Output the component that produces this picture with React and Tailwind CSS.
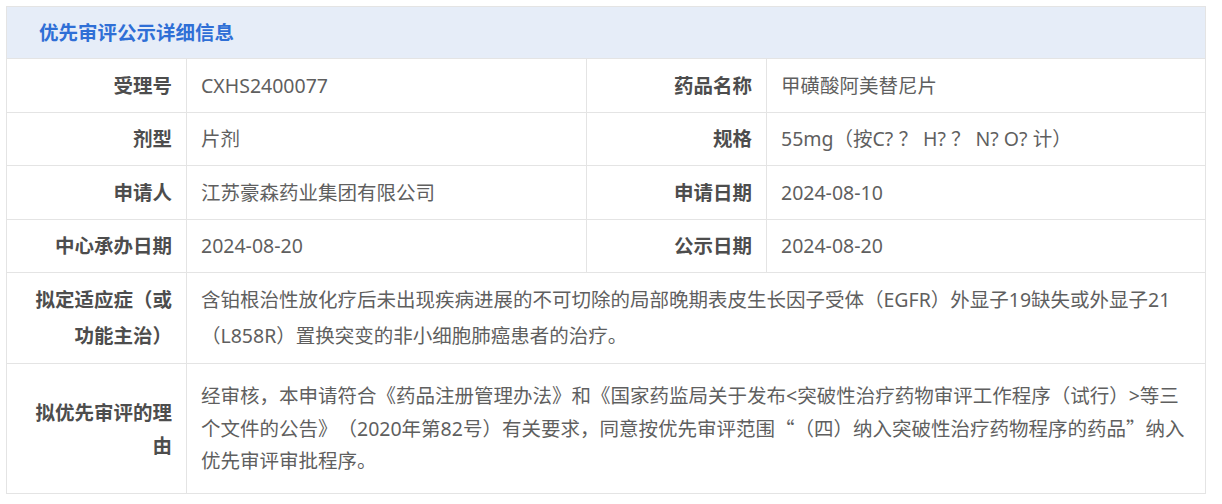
import React from 'react';

const rows = [
  ['受理号', 'CXHS2400077', '药品名称', '甲磺酸阿美替尼片'],
  ['剂型', '片剂', '规格', '55mg（按C? ？ H? ？ N? O? 计）'],
  ['申请人', '江苏豪森药业集团有限公司', '申请日期', '2024-08-10'],
  ['中心承办日期', '2024-08-20', '公示日期', '2024-08-20'],
];

const label = 'border border-[#e4e4e4] text-right pr-[14px] pl-[14px] font-bold text-[#4d4d4d] align-middle';
const value = 'border border-[#e4e4e4] pl-[14px] pr-[14px] text-[#5f5f5f] align-middle';
const cjk = "font-['Noto_Sans_CJK_SC',sans-serif]";

const App = () => {
  return (
    <div className="p-[6px] bg-white font-['Noto_Sans','Noto_Sans_CJK_SC',sans-serif] text-[19.5px] [text-spacing-trim:space-all]">
      <table className="w-[1200px] table-fixed border-collapse">
        <colgroup>
          <col className="w-[180px]" />
          <col className="w-[400px]" />
          <col className="w-[180px]" />
          <col />
        </colgroup>
        <tbody>
          <tr className="h-[52px]">
            <td colSpan={4} className="border border-[#e4e4e4] bg-[#e6edf8] px-[32px] font-bold text-[#2f6fd6]">
              优先审评公示详细信息
            </td>
          </tr>
          {rows.map((r) => (
            <tr key={r[0]} className="h-[53.5px]">
              <td className={label}>{r[0]}</td>
              <td className={value}>{r[1]}</td>
              <td className={label}>{r[2]}</td>
              <td className={value}>{r[3]}</td>
            </tr>
          ))}
          <tr>
            <td className={`${label} leading-[36px] py-[9px]`}>拟定适应症（或功能主治）</td>
            <td colSpan={3} className={`${value} leading-[36px] py-[9px]`}>
              含铂根治性放化疗后未出现疾病进展的不可切除的局部晚期表皮生长因子受体（EGFR）外显子19缺失或外显子21<br />（L858R）置换突变的非小细胞肺癌患者的治疗。
            </td>
          </tr>
          <tr>
            <td className={`${label} leading-[33px] py-[16px]`}>拟优先审评的理由</td>
            <td colSpan={3} className={`${value} leading-[32px] py-[16px]`}>
              经审核，本申请符合《药品注册管理办法》和《国家药监局关于发布&lt;突破性治疗药物审评工作程序（试行）&gt;等三<br />
              个文件的公告》（2020年第82号）有关要求，同意按优先审评范围<span className={cjk}>“</span>（四）纳入突破性治疗药物程序的药品<span className={cjk}>”</span>纳入<br />
              优先审评审批程序。
            </td>
          </tr>
        </tbody>
      </table>
    </div>
  );
};

export default App;
